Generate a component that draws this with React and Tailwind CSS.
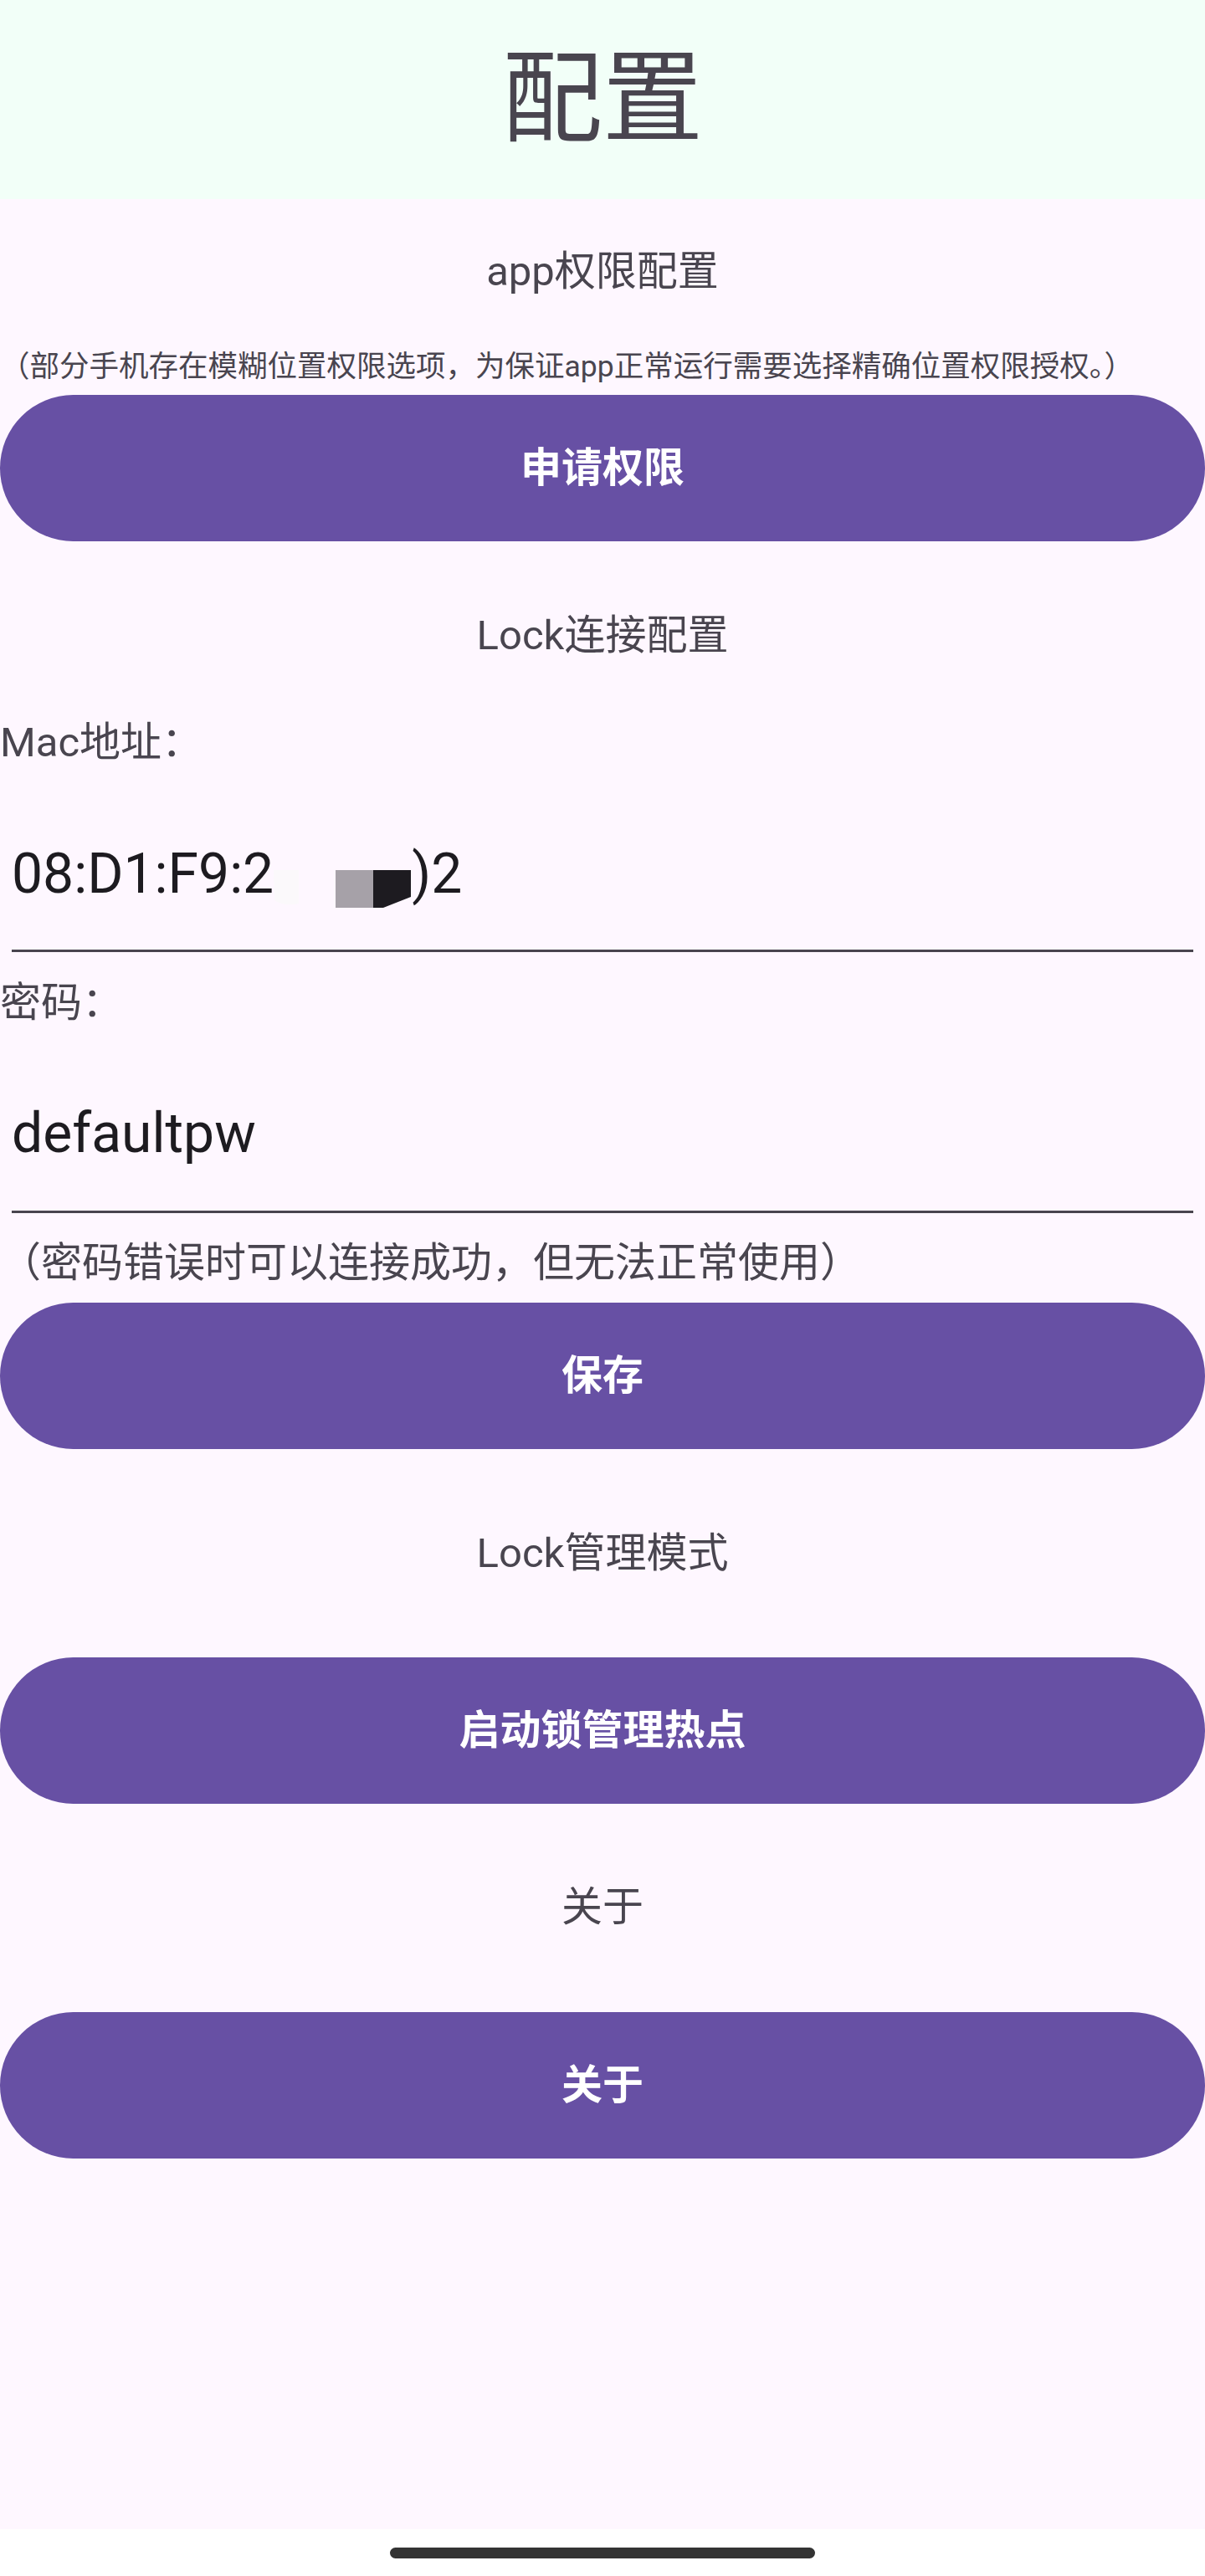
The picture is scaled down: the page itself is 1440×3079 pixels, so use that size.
import React from "react";

const FONT = { fontFamily: "Roboto, 'Noto Sans CJK SC', sans-serif" };

function SectionTitle({ children, mt }) {
  return (
    <div className={`h-[60px] leading-[60px] text-center text-[49px] text-[#49454f] ${mt}`}>
      {children}
    </div>
  );
}

function Label({ children, mt }) {
  return (
    <div className={`h-[60px] leading-[60px] text-left text-[49px] text-[#49454f] ${mt}`}>
      {children}
    </div>
  );
}

function PillButton({ children, mt }) {
  return (
    <button
      className={`w-full h-[175px] rounded-full bg-[#6750a4] text-white text-[49px] font-semibold flex items-center justify-center ${mt}`}
    >
      {children}
    </button>
  );
}

export default function App() {
  return (
    <div className="w-[1440px] min-h-[3079px] flex flex-col" style={FONT}>
      <header className="h-[238px] bg-[#f2fff8] flex items-center justify-center">
        <h1 className="text-[120px] leading-none text-[#49454f] font-normal">配置</h1>
      </header>

      <main className="h-[2785px] bg-[#fef7ff] flex flex-col">
        <SectionTitle mt="mt-[57px]">app权限配置</SectionTitle>
        <div className="h-[50px] leading-[50px] text-[35.5px] text-[#49454f] mt-[58px] whitespace-nowrap">
          （部分手机存在模糊位置权限选项，为保证app正常运行需要选择精确位置权限授权。）
        </div>
        <PillButton mt="mt-[9px]">申请权限</PillButton>

        <SectionTitle mt="mt-[83px]">Lock连接配置</SectionTitle>
        <Label mt="mt-[68px]">Mac地址：</Label>

        <div className="h-[80px] leading-[80px] text-[66px] text-[#1d1b20] pl-[14px] mt-[87px] whitespace-nowrap">
          <span>08:D1:F9:2</span>
          <svg
            width="165"
            height="45"
            viewBox="0 0 165 45"
            className="inline-block align-[-18px]"
          >
            <path d="M0 0 H30 V40 Q12 44 1 36 Z" fill="#fbf9fb" />
            <rect x="74" y="0" width="45" height="45" fill="#a6a1a8" />
            <path d="M119 0 H164 V32 L131 45 H119 Z" fill="#1d1b20" />
          </svg>
          <span>)2</span>
        </div>
        <div className="h-[3px] bg-[#49454f] mx-[14px] mt-[50px]" />

        <Label mt="mt-[31px]">密码：</Label>
        <div className="h-[80px] leading-[80px] text-[66px] text-[#1d1b20] pl-[14px] mt-[86px]">
          defaultpw
        </div>
        <div className="h-[3px] bg-[#49454f] mx-[14px] mt-[52px]" />

        <div className="h-[60px] leading-[60px] text-[49px] text-[#49454f] mt-[30px] whitespace-nowrap">
          （密码错误时可以连接成功，但无法正常使用）
        </div>
        <PillButton mt="mt-[17px]">保存</PillButton>

        <SectionTitle mt="mt-[95px]">Lock管理模式</SectionTitle>
        <PillButton mt="mt-[94px]">启动锁管理热点</PillButton>

        <SectionTitle mt="mt-[94px]">关于</SectionTitle>
        <PillButton mt="mt-[95px]">关于</PillButton>
      </main>

      <footer className="h-[56px] bg-white flex justify-center pt-[22px]">
        <div className="w-[508px] h-[13px] rounded-full bg-[#333333]" />
      </footer>
    </div>
  );
}
